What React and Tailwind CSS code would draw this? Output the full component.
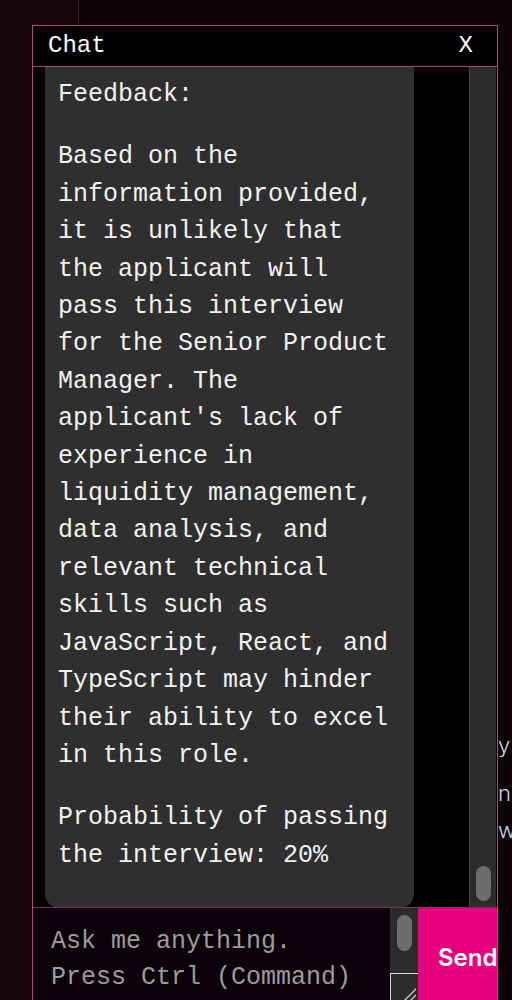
import React from 'react';

const mono = { fontFamily: '"Liberation Mono", "DejaVu Sans Mono", monospace' };

export default function App() {
    return (
        <div className="relative w-[512px] h-[1000px] overflow-hidden bg-[#0a0206]" style={{ fontFamily: 'Inter, "Liberation Sans", sans-serif' }}>
            {/* page behind the chat window */}
            <div className="flex h-full">
                <div className="w-[79px] h-full bg-[#14040c] border-r border-[#3a1628]"></div>
                <div className="flex-1 flex flex-col items-end pt-[733px] text-[#d4d4d4] font-light text-[22px] leading-[24px]">
                    <div className="w-[14px] h-[24px] overflow-hidden">y</div>
                    <div className="w-[14px] h-[24px] overflow-hidden mt-[24px]">n</div>
                    <div className="w-[14px] h-[24px] overflow-hidden mt-[13px]">w</div>
                </div>
            </div>

            {/* floating chat window */}
            <div className="absolute left-[32px] top-[25px] w-[466px] h-[1000px] border border-[#b0467a] bg-black flex flex-col">
                {/* header */}
                <div className="h-[41px] flex items-center justify-between pl-[15px] pr-[24px] border-b border-[#b0467a] text-white text-[24px]" style={mono}>
                    <span>Chat</span>
                    <span>X</span>
                </div>

                {/* messages */}
                <div className="h-[840px] flex">
                    <div className="flex-1 overflow-hidden pl-[12px]">
                        <div className="w-[369px] bg-[#2f2f2f] rounded-b-[14px] px-[13px] pt-[9px] pb-[34px] text-[#f2f2f2] text-[25px] leading-[37.4px]" style={mono}>
                            <p className="mb-[25px]">Feedback:</p>
                            <p className="mb-[25px]">Based on the information provided, it is unlikely that the applicant will pass this interview for the Senior Product Manager. The applicant's lack of experience in liquidity management, data analysis, and relevant technical skills such as JavaScript, React, and TypeScript may hinder their ability to excel in this role.</p>
                            <p>Probability of passing the interview: 20%</p>
                        </div>
                    </div>
                    <div className="w-[27px] mr-[1px] bg-[#2b2b2b] border-l border-[#454545] flex flex-col justify-end items-center pb-[6px]">
                        <div className="w-[15px] h-[35px] rounded-full bg-[#6c6c6c]"></div>
                    </div>
                </div>

                {/* input row */}
                <div className="flex-1 flex border-t border-[#7a3350]">
                    <div className="flex-1 bg-[#0d0109] pl-[18px] pt-[16px] text-[#9c9c9c] text-[25px] leading-[36px]" style={mono}>
                        <div>Ask me anything.</div>
                        <div>Press Ctrl (Command)</div>
                    </div>
                    <div className="w-[28px] bg-[#2b2b2b] flex flex-col items-center">
                        <div className="w-[15px] h-[36px] mt-[7px] rounded-full bg-[#6c6c6c]"></div>
                        <div className="mt-[22px] w-full h-[30px] border-t border-l border-[#d8d8d8] bg-[#2b2b2b] relative">
                            <svg className="absolute right-[2px] bottom-[2px]" width="20" height="20" viewBox="0 0 20 20">
                                <path d="M4 24 L24 4 M10 24 L24 10" stroke="#bdbdbd" strokeWidth="1.5" fill="none" />
                            </svg>
                        </div>
                    </div>
                    <div className="w-[79px] bg-[#e6007e] text-white text-[24px] font-semibold pl-[20px] pt-[32px] overflow-hidden whitespace-nowrap">
                        Send
                    </div>
                </div>
            </div>
        </div>
    );
}
